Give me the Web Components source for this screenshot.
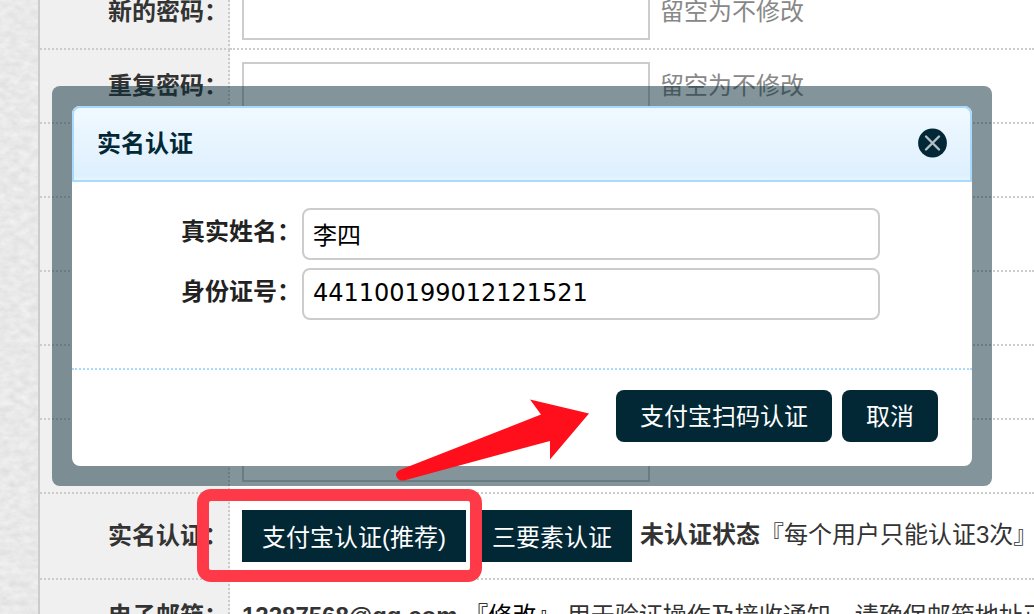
<!DOCTYPE html>
<html lang="zh-CN">
<head>
<meta charset="utf-8">
<title>实名认证</title>
<style>
  html, body {
    margin: 0;
    height: 100%;
  }

  body {
    --ink: #022836;
    --line: #ccc;
    --accent: #a8dafe;
    position: relative;
    overflow: hidden;
    color: #333;
    font: 24px/36px "Liberation Sans", "Noto Sans CJK SC", sans-serif;
  }
</style>
</head>
<body>
<account-page>
  <form-row label="新的密码：" field hint="留空为不修改"></form-row>
  <form-row label="重复密码：" field hint="留空为不修改"></form-row>
  <form-row></form-row>
  <form-row></form-row>
  <form-row></form-row>
  <form-row></form-row>
  <form-row field centered></form-row>
  <form-row label="实名认证：" tall centered>
    <verify-actions></verify-actions>
  </form-row>
  <form-row label="电子邮箱：" centered>
    <email-info></email-info>
  </form-row>
</account-page>
<verify-dialog heading="实名认证">
  <dialog-field label="真实姓名：" value="李四"></dialog-field>
  <dialog-field label="身份证号：" value="441100199012121521"></dialog-field>
  <dialog-button slot="footer">支付宝扫码认证</dialog-button>
  <dialog-button slot="footer">取消</dialog-button>
</verify-dialog>
<pointer-arrow></pointer-arrow>

<script>
class BaseElement extends HTMLElement {
  constructor() {
    super();
    this.attachShadow({ mode: "open" });
  }

  attr(name) {
    return this.getAttribute(name) || "";
  }

  connectedCallback() {
    const template = document.createElement("template");
    template.innerHTML = `<style>* { box-sizing: border-box; }${this.getStyles()}</style>${this.getTemplate()}`;
    this.shadowRoot.appendChild(template.content.cloneNode(true));
  }
}

class AccountPage extends BaseElement {
  getStyles() {
    return `
    :host {
      display: grid;
      grid-template-columns: 38px 1fr;
      height: 100%;
      overflow: hidden;
    }
    .paper {
      width: 100%;
      height: 100%;
      background: #e8e8e8;
    }
    main {
      border-left: 2px solid var(--line);
      background: #fff;
      margin-top: -24px;
      min-width: 0;
    }
    `;
  }

  getTemplate() {
    return `
    <svg class="paper" aria-hidden="true">
      <filter id="grain" x="0" y="0" width="100%" height="100%" color-interpolation-filters="sRGB">
        <feTurbulence type="fractalNoise" baseFrequency="0.1 0.16" numOctaves="3" seed="7"/>
        <feColorMatrix values="0.1 0 0 0 0.862  0.1 0 0 0 0.862  0.1 0 0 0 0.862  0 0 0 0 1"/>
      </filter>
      <rect width="100%" height="100%" filter="url(#grain)"/>
    </svg>
    <main><slot></slot></main>
    `;
  }
}

class FormRow extends BaseElement {
  getStyles() {
    return `
    :host {
      display: grid;
      grid-template-columns: 190px 1fr;
      min-height: 74px;
    }
    :host([tall]) { min-height: 86px; }
    .label {
      display: flex;
      justify-content: flex-end;
      align-items: center;
      background: #f0f0f0;
      border-right: 2px dotted var(--line);
      border-bottom: 2px dotted var(--line);
      font-weight: bold;
      white-space: nowrap;
    }
    .content {
      display: flex;
      align-items: center;
      gap: 10px;
      padding: 12px 0 8px 12px;
      border-bottom: 2px dotted var(--line);
      white-space: nowrap;
      min-width: 0;
    }
    :host([centered]) .content {
      padding-top: 10px;
      padding-bottom: 10px;
    }
    input {
      width: 408px;
      height: 52px;
      border: 2px solid var(--line);
      background: #fff;
      padding: 0 10px;
      font: inherit;
    }
    .hint {
      color: #888;
      padding-bottom: 4px;
    }
    `;
  }

  getTemplate() {
    const label = this.attr("label");
    const field = this.hasAttribute("field")
      ? `<input id="field" type="password" aria-label="${label || "input"}"><span class="hint">${this.attr("hint")}</span>`
      : "";
    return `
    <label class="label" for="field">${label}</label>
    <div class="content">${field}<slot></slot></div>
    `;
  }
}

class VerifyActions extends BaseElement {
  getStyles() {
    return `
    :host {
      display: flex;
      align-items: center;
      gap: 8px;
    }
    .buttons {
      position: relative;
      display: flex;
      gap: 6px;
    }
    button {
      height: 52px;
      padding: 4px 20px 0;
      border: 0;
      background: var(--ink);
      color: #fff;
      font: inherit;
      white-space: nowrap;
    }
    .marked { position: relative; }
    /* highlight ring round the recommended button */
    .marked::after {
      content: "";
      position: absolute;
      z-index: 1;
      inset: -21px -16px -20px -45px;
      border: 12px solid #ff3a48;
      border-radius: 14px;
      pointer-events: none;
    }
    p {
      margin: 0;
      padding-bottom: 2px;
    }
    `;
  }

  getTemplate() {
    return `
    <div class="buttons">
      <div class="marked"><button type="button">支付宝认证(推荐)</button></div>
      <button type="button">三要素认证</button>
    </div>
    <p><b>未认证状态</b>『每个用户只能认证3次』</p>
    `;
  }
}

class EmailInfo extends BaseElement {
  getStyles() {
    return `
    :host { display: block; }
    a {
      color: #000;
      text-decoration: none;
    }
    `;
  }

  getTemplate() {
    return `<b>12287568@qq.com</b> <a href="#">『修改』</a> 用于验证操作及接收通知，请确保邮箱地址正确`;
  }
}

class VerifyDialog extends BaseElement {
  getStyles() {
    return `
    :host {
      position: absolute;
      top: 86px;
      left: 52px;
      right: 42px;
      padding: 20px;
      border-radius: 8px;
      background: rgba(7, 43, 54, .5);
      box-sizing: border-box;
    }
    section {
      background: #fff;
      border-radius: 8px;
    }
    header {
      display: flex;
      align-items: center;
      justify-content: space-between;
      height: 76px;
      padding: 0 23px;
      border: 2px solid var(--accent);
      border-radius: 8px 8px 0 0;
      background: linear-gradient(#f0f9ff, #def0fe 94%, #e8f5ff);
    }
    h2 {
      margin: 0;
      font-size: 24px;
      color: var(--ink);
    }
    .close {
      display: flex;
      padding: 0 0 2px;
      border: 0;
      background: none;
    }
    .body {
      display: grid;
      gap: 8px;
      padding: 26px 92px 48px 72px;
    }
    footer {
      display: flex;
      justify-content: flex-end;
      gap: 10px;
      padding: 20px 34px 24px;
      border-top: 2px dotted var(--accent);
    }
    `;
  }

  getTemplate() {
    return `
    <section role="dialog" aria-labelledby="title">
      <header>
        <h2 id="title">${this.attr("heading")}</h2>
        <button class="close" type="button" aria-label="关闭">
          <svg width="30" height="30" viewBox="0 0 30 30">
            <circle cx="15.5" cy="15" r="14.4" fill="#022836"/>
            <path d="M9 8.5l13 13m0-13l-13 13" stroke="#b4bfc3" stroke-width="2.4" stroke-linecap="round"/>
          </svg>
        </button>
      </header>
      <div class="body"><slot></slot></div>
      <footer><slot name="footer"></slot></footer>
    </section>
    `;
  }
}

class DialogField extends BaseElement {
  getStyles() {
    return `
    :host {
      display: grid;
      grid-template-columns: 157px 1fr;
      column-gap: 1px;
      align-items: center;
    }
    label {
      padding-bottom: 4px;
      text-align: right;
      font-weight: bold;
      color: #222;
      white-space: nowrap;
    }
    input {
      width: 100%;
      height: 52px;
      padding: 0 9px 2px;
      border: 2px solid var(--line);
      border-radius: 8px;
      color: #000;
      font: 24px/28px "DejaVu Sans", "Noto Sans CJK SC", sans-serif;
    }
    `;
  }

  getTemplate() {
    return `
    <label for="value">${this.attr("label")}</label>
    <input id="value" type="text" value="${this.attr("value")}">
    `;
  }
}

class DialogButton extends BaseElement {
  getStyles() {
    return `
    :host { display: block; }
    button {
      height: 52px;
      padding: 2px 24px 0;
      border: 0;
      border-radius: 8px;
      background: var(--ink);
      color: #fff;
      font: inherit;
      white-space: nowrap;
    }
    `;
  }

  getTemplate() {
    return `<button type="button"><slot></slot></button>`;
  }
}

class PointerArrow extends BaseElement {
  getStyles() {
    return `
    :host {
      position: absolute;
      top: 398px;
      left: 394px;
      pointer-events: none;
    }
    svg { display: block; }
    `;
  }

  getTemplate() {
    return `
    <svg width="196" height="84" viewBox="0 0 196 84" aria-hidden="true">
      <path d="M136 1.5L195 15.5L156 61.5V43L10 82.5Q3 83 2 77Q2 73 7 71.5L147 16.5Z" fill="#ff0f1b"/>
    </svg>
    `;
  }
}

customElements.define("account-page", AccountPage);
customElements.define("form-row", FormRow);
customElements.define("verify-actions", VerifyActions);
customElements.define("email-info", EmailInfo);
customElements.define("verify-dialog", VerifyDialog);
customElements.define("dialog-field", DialogField);
customElements.define("dialog-button", DialogButton);
customElements.define("pointer-arrow", PointerArrow);
</script>
</body>
</html>
